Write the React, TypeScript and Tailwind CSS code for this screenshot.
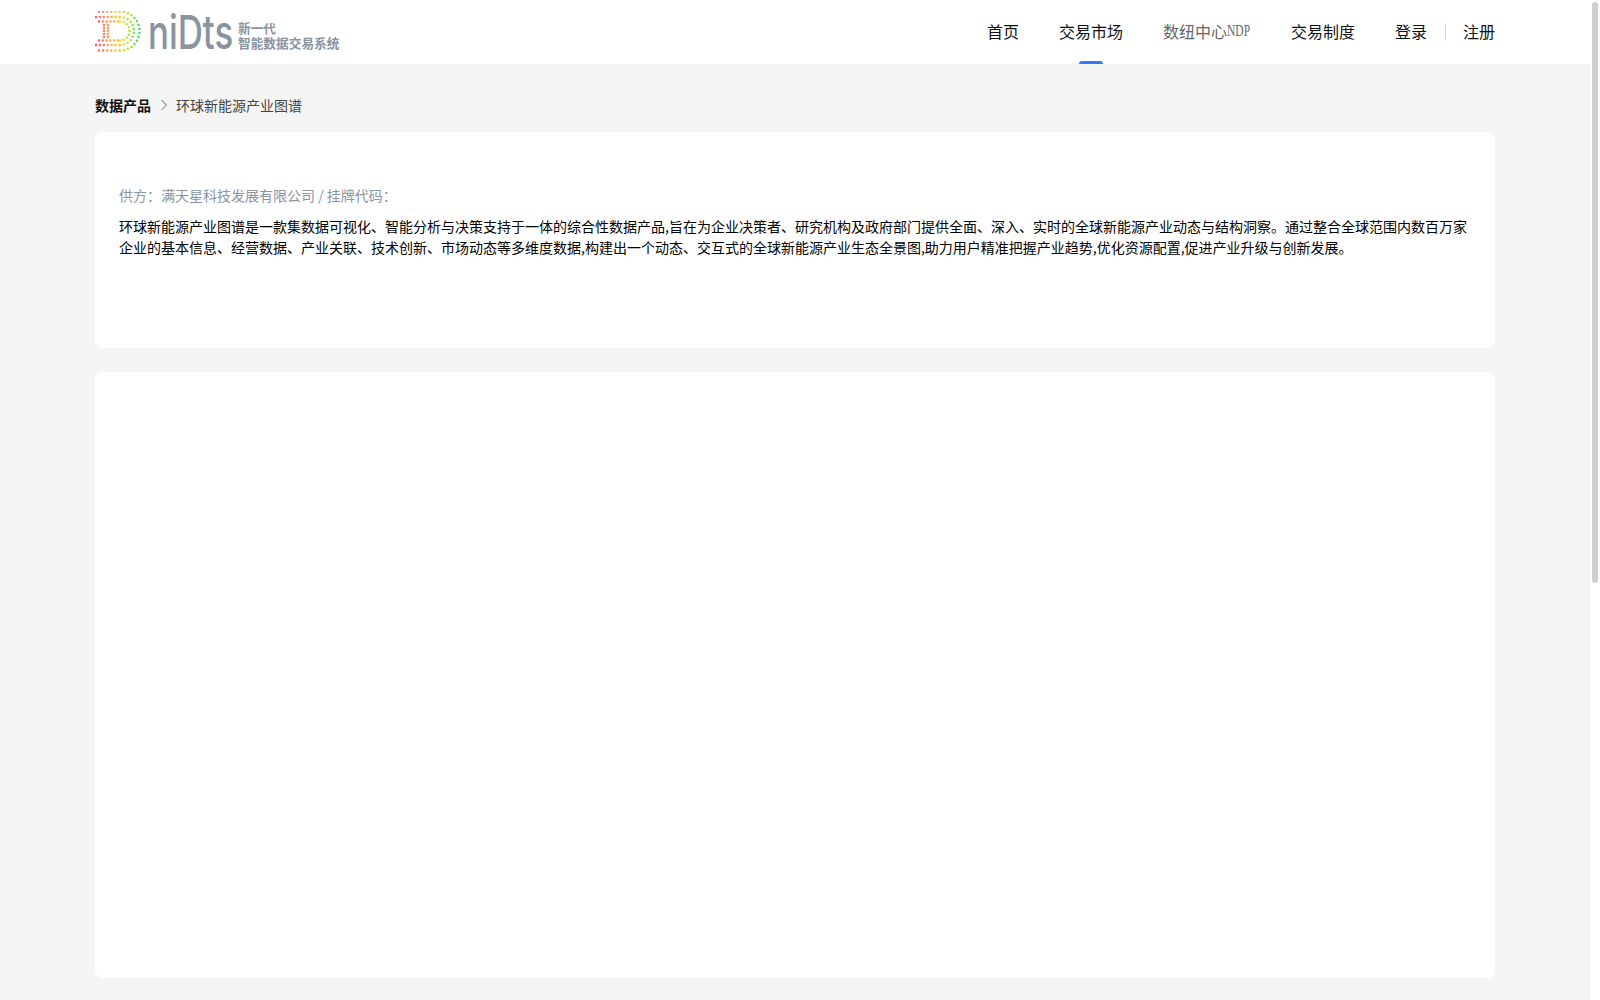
const sans = { fontFamily: '"Noto Sans CJK SC", "Liberation Sans", sans-serif' };

function lerp(a: number[], b: number[], t: number) {
  return `rgb(${a.map((v, i) => Math.round(v + (b[i] - v) * t)).join(',')})`;
}

// pink on the left through orange and yellow to green on the right
function dotColor(x: number) {
  const stops: [number, number[]][] = [
    [0, [255, 77, 125]],
    [14, [255, 160, 90]],
    [26, [248, 214, 50]],
    [36, [170, 226, 50]],
    [46, [48, 216, 120]],
  ];
  for (let i = 1; i < stops.length; i++) {
    if (x <= stops[i][0]) {
      const [x0, c0] = stops[i - 1];
      const [x1, c1] = stops[i];
      return lerp(c0, c1, Math.max(0, (x - x0) / (x1 - x0)));
    }
  }
  return lerp(stops[3][1], stops[4][1], 1);
}

function LogoMark() {
  const cy = 20;
  const cx = 25;
  const rings = [
    { r: 19.5, start: 4, step: 4.1 },
    { r: 14, start: 1, step: 3.9 },
    { r: 9.5, start: 4, step: 3.8 },
  ];
  const dots: { x: number; y: number }[] = [];
  rings.forEach(({ r, start, step }) => {
    for (let x = start; x < cx; x += step) {
      dots.push({ x, y: cy - r }, { x, y: cy + r });
    }
    const count = Math.round((Math.PI * r) / step);
    for (let i = 0; i <= count; i++) {
      const a = -Math.PI / 2 + (Math.PI * i) / count;
      dots.push({ x: cx + r * Math.cos(a), y: cy + r * Math.sin(a) });
    }
  });
  [9, 13].forEach((x) => {
    for (let y = 14; y <= 26; y += 3) dots.push({ x, y });
  });
  return (
    <svg width="48" height="42" viewBox="0 0 48 42" className="shrink-0">
      {dots.map((d, i) => (
        <rect key={i} x={d.x - 1.15} y={d.y - 1.15} width="2.3" height="2.3" rx="0.7" fill={dotColor(d.x)} />
      ))}
    </svg>
  );
}

function Logo() {
  return (
    <div className="flex items-center">
      <LogoMark />
      <svg width="86" height="44" viewBox="0 0 116 44" preserveAspectRatio="none" className="ml-[5px] shrink-0">
        <text x="0" y="39" fontFamily="Inter, sans-serif" fontSize="47" fontWeight="500" fill="#8a93a0">niDts</text>
      </svg>
      <div className="ml-[4px] mt-[6px] text-[12.7px] font-bold leading-[15px] text-[#8a93a0]">
        <div>新一代</div>
        <div>智能数据交易系统</div>
      </div>
    </div>
  );
}

function NavItem({ children, active, gray }: { children: React.ReactNode; active?: boolean; gray?: boolean }) {
  return (
    <a className={`relative flex h-full items-center pb-[2px] text-base ${gray ? 'text-[#666]' : 'text-[#111]'}`}>
      {children}
      {active && <span className="absolute bottom-0 left-1/2 h-[3px] w-6 -translate-x-1/2 rounded-t-sm bg-[#2f7cf6]" />}
    </a>
  );
}

export default function App() {
  return (
    <div className="flex h-screen overflow-hidden bg-white" style={sans}>
      <div className="flex min-w-0 flex-1 flex-col bg-[#f5f5f5]">
        <header className="flex h-16 shrink-0 items-center justify-between bg-white px-[95px]">
          <Logo />
          <nav className="flex h-full items-center">
            <div className="flex h-full gap-10">
              <NavItem>首页</NavItem>
              <NavItem active>交易市场</NavItem>
              <NavItem gray>
                数纽中心
                <span className="inline-block w-6 origin-left scale-x-[0.72] font-['Liberation_Serif',serif]">NDP</span>
              </NavItem>
              <NavItem>交易制度</NavItem>
              <NavItem>登录</NavItem>
            </div>
            <span className="ml-[18px] mr-[17px] h-[18px] w-px bg-[#d9d9d9]" />
            <a className="pb-[2px] text-base text-[#111]">注册</a>
          </nav>
        </header>

        <main className="flex flex-1 flex-col px-[95px] pb-[22px]">
          <div className="flex h-[68px] shrink-0 items-center pt-[13px] text-sm">
            <span className="font-bold text-[#111]">数据产品</span>
            <svg width="10" height="12" viewBox="0 0 10 12" className="ml-[8px] mr-[7px] text-[#666]" fill="none" stroke="currentColor" strokeWidth="1">
              <path d="M2.5 1 L7.5 6 L2.5 11" />
            </svg>
            <span className="text-[#444]">环球新能源产业图谱</span>
          </div>

          <section className="h-[216px] shrink-0 rounded-lg bg-white px-6 pt-[53px]">
            <p className="text-sm leading-5 text-[#8a94a3]">供方：满天星科技发展有限公司 / 挂牌代码：</p>
            <p className="mt-[11px] text-sm leading-[21px] text-black">
              环球新能源产业图谱是一款集数据可视化、智能分析与决策支持于一体的综合性数据产品,旨在为企业决策者、研究机构及政府部门提供全面、深入、实时的全球新能源产业动态与结构洞察。通过整合全球范围内数百万家企业的基本信息、经营数据、产业关联、技术创新、市场动态等多维度数据,构建出一个动态、交互式的全球新能源产业生态全景图,助力用户精准把握产业趋势,优化资源配置,促进产业升级与创新发展。
            </p>
          </section>

          <section className="mt-6 flex-1 rounded-lg bg-white" />
        </main>
      </div>

      {/* page scrollbar */}
      <div className="w-[10px] shrink-0 bg-white px-[2px] pt-[2px]">
        <div className="h-[581px] w-[6px] rounded-[3px] bg-[#cfcfcf]" />
      </div>
    </div>
  );
}
